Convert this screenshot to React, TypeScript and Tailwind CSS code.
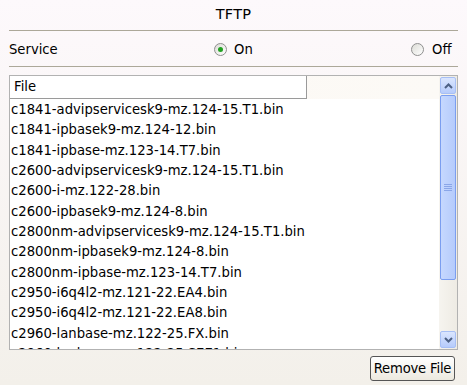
const files = [
	"c1841-advipservicesk9-mz.124-15.T1.bin",
	"c1841-ipbasek9-mz.124-12.bin",
	"c1841-ipbase-mz.123-14.T7.bin",
	"c2600-advipservicesk9-mz.124-15.T1.bin",
	"c2600-i-mz.122-28.bin",
	"c2600-ipbasek9-mz.124-8.bin",
	"c2800nm-advipservicesk9-mz.124-15.T1.bin",
	"c2800nm-ipbasek9-mz.124-8.bin",
	"c2800nm-ipbase-mz.123-14.T7.bin",
	"c2950-i6q4l2-mz.121-22.EA4.bin",
	"c2950-i6q4l2-mz.121-22.EA8.bin",
	"c2960-lanbase-mz.122-25.FX.bin",
	"c2960-lanbase-mz.122-25.SEE1.bin",
]

const Radio = ({ checked }: { checked?: boolean }) => (
	<span className="flex items-center justify-center w-[13px] h-[13px] rounded-full border border-[#8f8f8f] bg-gradient-to-br from-[#dcdcd6] to-[#ffffff]">
		{checked && <span className="w-[5px] h-[5px] rounded-full bg-[#21a121]" />}
	</span>
)

const Arrow = ({ up }: { up?: boolean }) => (
	<div className="h-[17px] w-full flex items-center justify-center border border-[#a7bff5] bg-gradient-to-b from-[#dbe6fe] to-[#b6cbfb] rounded-[2px]">
		<svg width="9" height="6" viewBox="0 0 9 6">
			<path d={up ? "M1 5 L4.5 1.5 L8 5" : "M1 1 L4.5 4.5 L8 1"} fill="none" stroke="#4d6185" strokeWidth="2" />
		</svg>
	</div>
)

export default function App() {
	return (
		<div className="w-[467px] h-[385px] overflow-hidden flex flex-col bg-gradient-to-b from-[#fdf9fc] to-[#f3f0ea] text-black font-['DejaVu_Sans',sans-serif] text-[13.2px]">
			<div className="h-[30px] flex items-center justify-center text-[14.5px] tracking-[0.3px]">TFTP</div>
			<div className="mx-[9px] border-t border-[#aca899]" />
			<div className="h-[35px] flex items-center px-[9px] pt-[2px]">
				<span className="w-[205px]">Service</span>
				<span className="w-[197px] flex items-center gap-[7px]">
					<Radio checked />
					<span>On</span>
				</span>
				<span className="flex items-center gap-[8px]">
					<Radio />
					<span>Off</span>
				</span>
			</div>
			<div className="mx-[9px] border-t border-[#aca899]" />
			<div className="mt-[8px] mx-[9px] h-[275px] border border-[#b2b2b2] bg-white flex overflow-hidden">
				<div className="flex-1 flex flex-col overflow-hidden">
					<div className="h-[23px] flex shrink-0 bg-gradient-to-r from-[#fdf8f4] to-[#fcfaf6]">
						<div className="w-[297px] bg-white border-r border-b border-[#9a9a9a] flex items-center pl-[4px]">File</div>
					</div>
					{files.map((f) => (
						<div key={f} className="h-[20.36px] shrink-0 flex items-center pl-[1px] pt-[1px] whitespace-nowrap">
							{f}
						</div>
					))}
				</div>
				<div className="w-[18px] flex flex-col bg-gradient-to-r from-[#f6f4ef] to-[#eeebe4] p-px">
					<Arrow up />
					<div className="mt-px h-[185px] border border-[#7b9ef0] rounded-[2px] bg-gradient-to-r from-[#c6d8fe] to-[#b5cbfc] flex items-center justify-center">
						<div className="flex flex-col gap-px">
							<div className="w-[8px] h-px bg-[#8aa6e8]" />
							<div className="w-[8px] h-px bg-[#8aa6e8]" />
							<div className="w-[8px] h-px bg-[#8aa6e8]" />
							<div className="w-[8px] h-px bg-[#8aa6e8]" />
						</div>
					</div>
					<div className="flex-1" />
					<Arrow />
				</div>
			</div>
			<div className="flex justify-end pr-[12px] mt-[6px]">
				<button className="h-[25px] w-[85px] rounded-[3px] border border-[#555] bg-gradient-to-b from-[#ffffff] to-[#ece9df] flex items-center justify-center tracking-[-0.2px]">
					Remove File
				</button>
			</div>
		</div>
	)
}
